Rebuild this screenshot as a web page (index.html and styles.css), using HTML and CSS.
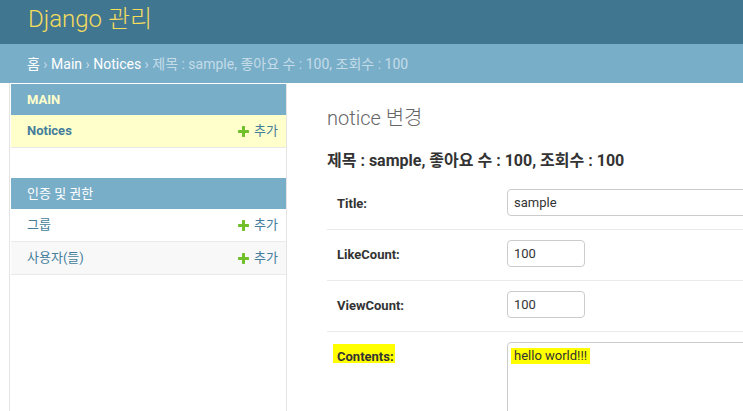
FILE: index.html
```html
<!DOCTYPE html>
<html lang="ko">
<head>
<meta charset="utf-8">
<title>notice 변경 | Django 사이트 관리</title>
<link rel="stylesheet" href="styles.css">
</head>
<body>
<div class="page">
  <header class="header">
    <div class="site-name">Django 관리</div>
  </header>
  <nav class="breadcrumbs">
    <a href="#">홈</a> › <a href="#">Main</a> › <a href="#">Notices</a> › 제목 : sample, 좋아요 수 : 100, 조회수 : 100
  </nav>
  <div class="main">
    <div class="toggle"></div>
    <aside class="sidebar">
      <div class="module current-app">
        <div class="caption"><a class="section" href="#">MAIN</a></div>
        <div class="row current-model">
          <a class="model" href="#">Notices</a>
          <a class="addlink" href="#"><svg viewBox="192 192 1408 1408" aria-hidden="true"><path fill="#70bf2b" d="M1600 796v192q0 40-28 68t-68 28h-416v416q0 40-28 68t-68 28h-192q-40 0-68-28t-28-68v-416h-416q-40 0-68-28t-28-68v-192q0-40 28-68t68-28h416v-416q0-40 28-68t68-28h192q40 0 68 28t28 68v416h416q40 0 68 28t28 68z"/></svg>추가</a>
        </div>
      </div>
      <div class="module">
        <div class="caption"><a class="section" href="#">인증 및 권한</a></div>
        <div class="row">
          <a class="model" href="#">그룹</a>
          <a class="addlink" href="#"><svg viewBox="192 192 1408 1408" aria-hidden="true"><path fill="#70bf2b" d="M1600 796v192q0 40-28 68t-68 28h-416v416q0 40-28 68t-68 28h-192q-40 0-68-28t-28-68v-416h-416q-40 0-68-28t-28-68v-192q0-40 28-68t68-28h416v-416q0-40 28-68t68-28h192q40 0 68 28t28 68v416h416q40 0 68 28t28 68z"/></svg>추가</a>
        </div>
        <div class="row alt">
          <a class="model" href="#">사용자(들)</a>
          <a class="addlink" href="#"><svg viewBox="192 192 1408 1408" aria-hidden="true"><path fill="#70bf2b" d="M1600 796v192q0 40-28 68t-68 28h-416v416q0 40-28 68t-68 28h-192q-40 0-68-28t-28-68v-416h-416q-40 0-68-28t-28-68v-192q0-40 28-68t68-28h416v-416q0-40 28-68t68-28h192q40 0 68 28t28 68v416h416q40 0 68 28t28 68z"/></svg>추가</a>
        </div>
      </div>
    </aside>
    <main class="content">
      <h1>notice 변경</h1>
      <h2>제목 : sample, 좋아요 수 : 100, 조회수 : 100</h2>
      <form>
        <fieldset>
          <div class="form-row">
            <label for="id_title">Title:</label>
            <input class="field text-field" id="id_title" type="text" value="sample">
          </div>
          <div class="form-row">
            <label for="id_like">LikeCount:</label>
            <input class="field int-field" id="id_like" type="text" value="100">
          </div>
          <div class="form-row">
            <label for="id_view">ViewCount:</label>
            <input class="field int-field" id="id_view" type="text" value="100">
          </div>
          <div class="form-row">
            <label><span class="hl-label">Contents:</span></label>
            <div class="field textarea"><span class="hl-text">hello world!!!</span></div>
          </div>
        </fieldset>
      </form>
    </main>
  </div>
</div>
</body>
</html>
```

FILE: styles.css
```css
* { box-sizing: border-box; }
html, body { margin: 0; padding: 0; }
body {
  font-family: Roboto, "Noto Sans CJK KR", "Liberation Sans", sans-serif;
  font-size: 14px;
  color: #333;
  background: #fff;
  overflow: hidden;
}
.page { display: flex; flex-direction: column; height: 100vh; }

.header {
  flex: none;
  height: 44px;
  padding: 7px 28px 0;
  background: #417690;
}
.site-name {
  font-size: 24px;
  font-weight: 300;
  line-height: 24px;
  color: #f5dd5d;
}

.breadcrumbs {
  flex: none;
  height: 39px;
  padding: 12px 28px 0 27px;
  background: #79aec8;
  font-size: 14px;
  line-height: 17px;
  color: #c4dce8;
  white-space: nowrap;
}
.breadcrumbs a { color: #fff; text-decoration: none; }

.main { flex: 1; display: flex; min-height: 0; }
.toggle { flex: 0 0 10px; border-right: 1px solid #e4e4e4; }
.sidebar {
  flex: 0 0 277px;
  padding-left: 1px;
  border-top: 1px solid transparent;
  border-right: 1px solid #e4e4e4;
}
.module { margin-bottom: 30px; }
.caption {
  background: #79aec8;
  padding: 8px 8px 8px 16px;
  font-size: 13px;
  line-height: 15px;
}
.section { color: #fff; text-decoration: none; }
.current-app .section { color: #ffc; font-weight: bold; }

.row {
  display: flex;
  justify-content: space-between;
  align-items: center;
  padding: 8px 8px 8px 16px;
  font-size: 13px;
  line-height: 16px;
  border-bottom: 1px solid #eaeaea;
}
.row a { color: #447e9b; text-decoration: none; }
.current-model { background: #ffc; }
.current-model .model { font-weight: bold; }
.row.alt { background: #f8f8f8; }
.addlink { display: inline-flex; align-items: center; }
.addlink svg { width: 11px; height: 11px; margin-right: 5px; }

.content {
  flex: 1;
  min-width: 0;
  padding: 23px 0 0 40px;
  overflow: hidden;
}
h1 {
  margin: 0;
  font-size: 20px;
  font-weight: 300;
  line-height: 24px;
  color: #666;
}
h2 {
  margin: 21px 0 0;
  font-size: 16px;
  font-weight: bold;
  line-height: 20px;
  color: #333;
  white-space: nowrap;
}
form { margin: 0; }
fieldset { border: 0; margin: 8px 0 0; padding: 0; min-width: 0; }
.form-row {
  display: flex;
  align-items: flex-start;
  padding: 10px 10px 13px;
  border-bottom: 1px solid #eaeaea;
}
.form-row label {
  flex: 0 0 170px;
  padding: 8px 10px 0 0;
  font-size: 13px;
  line-height: 13px;
  font-weight: bold;
  color: #333;
}
.field {
  flex: none;
  font-family: Roboto, "Noto Sans CJK KR", "Liberation Sans", sans-serif;
  font-size: 13px;
  color: #333;
  border: 1px solid #ccc;
  border-radius: 4px;
  background: #fff;
  margin: 0;
}
input.field { height: 27px; padding: 5px 6px; line-height: 15px; }
.text-field { width: 610px; }
.int-field { width: 78px; }
.textarea {
  width: 610px;
  height: 170px;
  padding: 5px 6px;
  line-height: 16px;
}
.hl-label { position: relative; z-index: 0; }
.hl-label::before {
  content: "";
  position: absolute;
  left: -4px;
  right: -1px;
  top: -5px;
  bottom: 1px;
  background: #ffff00;
  z-index: -1;
}
.hl-text {
  background: #ffff00;
  padding: 0 3px 1px;
  margin: 0 -3px;
}
```
